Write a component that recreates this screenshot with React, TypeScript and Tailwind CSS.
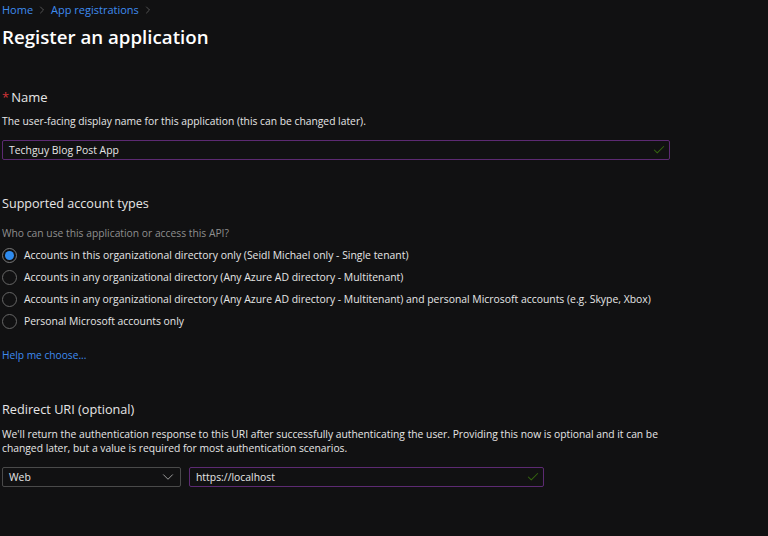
import { Check, ChevronDown, ChevronRight } from "lucide-react"

const accountTypes = [
  "Accounts in this organizational directory only (Seidl Michael only - Single tenant)",
  "Accounts in any organizational directory (Any Azure AD directory - Multitenant)",
  "Accounts in any organizational directory (Any Azure AD directory - Multitenant) and personal Microsoft accounts (e.g. Skype, Xbox)",
  "Personal Microsoft accounts only",
]

function TextField({ value, className }: { value: string; className: string }) {
  return (
    <div className={`flex h-[20px] items-center justify-between rounded-[2px] border border-[#5c2a72] pl-[6px] pr-[3px] text-[10.4px] text-[#e6e6e6] ${className}`}>
      <span>{value}</span>
      <Check size={14} strokeWidth={1.75} className="text-[#35660f]" />
    </div>
  )
}

function Radio({ checked, label }: { checked: boolean; label: string }) {
  return (
    <div className="flex h-[22px] items-center gap-[7px] text-[10.4px] text-[#e6e6e6]">
      <span className={`flex h-[15px] w-[15px] shrink-0 items-center justify-center rounded-full border ${checked ? "border-[#7a7a7a]" : "border-[#666666]"}`}>
        {checked && <span className="h-[9px] w-[9px] rounded-full bg-[#2f8cf0]" />}
      </span>
      <span>{label}</span>
    </div>
  )
}

export default function App() {
  return (
    <div className="h-[536px] w-[768px] overflow-hidden bg-[#111112] pl-[2px] font-['Open_Sans',sans-serif] text-[10.3px] leading-[14px] text-[#e6e6e6]">
      <div className="flex h-[20px] items-center gap-[3px] text-[11px] text-[#3f8cf0]">
        <span>Home</span>
        <ChevronRight size={12} strokeWidth={1.25} className="text-[#7a7a7a]" />
        <span>App registrations</span>
        <ChevronRight size={12} strokeWidth={1.25} className="text-[#7a7a7a]" />
      </div>
      <h1 className="mt-[3px] text-[18.7px] font-semibold leading-[28px] text-white">Register an application</h1>

      <div className="mt-[37px] flex items-center gap-[2px] text-[13px] leading-[18px]">
        <span className="text-[#d13438]">*</span>
        <span>Name</span>
      </div>
      <p className="mt-[8px]">The user-facing display name for this application (this can be changed later).</p>
      <div className="mt-[12px]">
        <TextField value="Techguy Blog Post App" className="w-[668px]" />
      </div>

      <h2 className="mt-[35px] text-[12.6px] font-normal leading-[18px]">Supported account types</h2>
      <p className="mt-[13px] text-[#8f8f8f]">Who can use this application or access this API?</p>
      <div className="mt-[4px]">
        {accountTypes.map((label, i) => (
          <Radio key={label} checked={i === 0} label={label} />
        ))}
      </div>
      <p className="mt-[16px] text-[10.2px] text-[#3f8cf0]">Help me choose...</p>

      <h2 className="mt-[38px] text-[12.7px] font-normal leading-[18px]">Redirect URI (optional)</h2>
      <p className="mt-[9px] w-[680px]">
        We'll return the authentication response to this URI after successfully authenticating the user. Providing this now is optional and it can be changed later, but a value is required for most authentication scenarios.
      </p>
      <div className="mt-[12px] flex gap-[8px]">
        <div className="flex h-[20px] w-[179px] items-center justify-between rounded-[2px] border border-[#4a4a4a] pl-[6px] pr-[3px] text-[10.4px]">
          <span>Web</span>
          <ChevronDown size={18} strokeWidth={1} className="text-[#c8c8c8]" />
        </div>
        <TextField value="https://localhost" className="w-[355px]" />
      </div>
    </div>
  )
}
